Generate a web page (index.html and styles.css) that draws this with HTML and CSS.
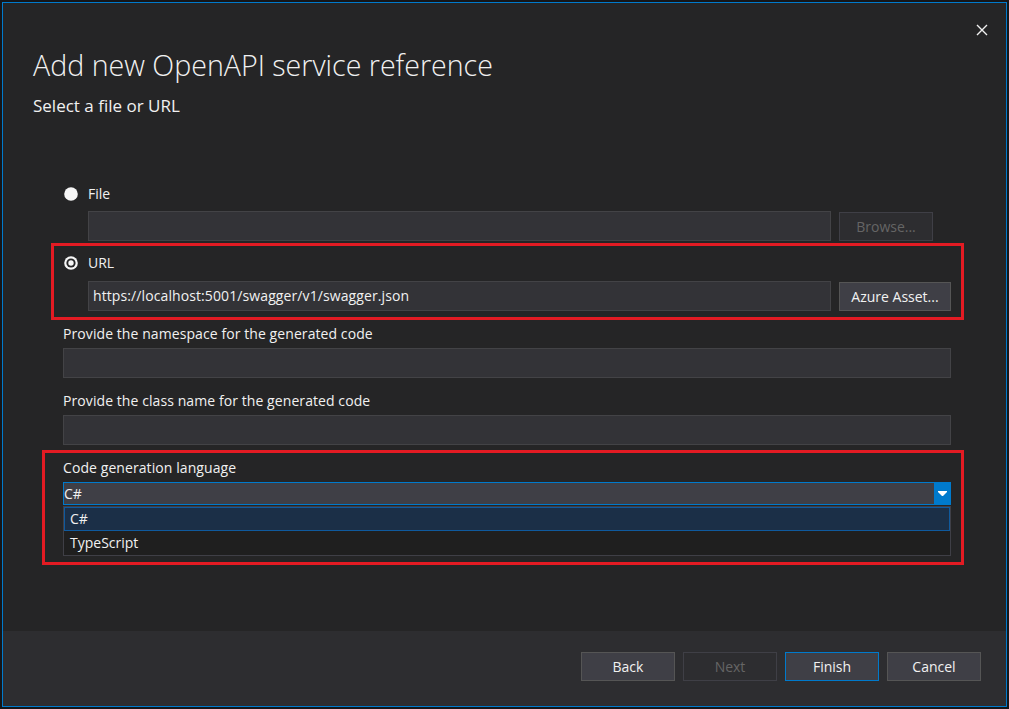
FILE: index.html
```html
<!DOCTYPE html>
<html lang="en">
<head>
<meta charset="utf-8">
<title>Add new OpenAPI service reference</title>
<link rel="stylesheet" href="styles.css">
</head>
<body>
<div class="dialog">
  <div class="main">
    <button class="close" aria-label="Close">
      <svg width="12" height="12" viewBox="0 0 12 12"><path d="M1 1 L11 11 M11 1 L1 11" stroke="#f1f1f1" stroke-width="1.4" fill="none"/></svg>
    </button>
    <h1 class="title">Add new OpenAPI service reference</h1>
    <p class="subtitle">Select a file or URL</p>
    <div class="form">
      <div class="radio-row file-row">
        <svg class="radio" width="14" height="14" viewBox="0 0 14 14"><circle cx="7" cy="7" r="6.8" fill="#f6f6f6"/></svg>
        <span>File</span>
      </div>
      <div class="input-row">
        <div class="input"></div>
        <div class="btn btn-disabled browse">Browse...</div>
      </div>
      <div class="mark mark-url">
        <div class="radio-row">
          <svg class="radio" width="14" height="14" viewBox="0 0 14 14"><circle cx="7" cy="7" r="6.8" fill="#f6f6f6"/><circle cx="7" cy="7" r="4.6" fill="#252526"/><circle cx="7" cy="7" r="2.7" fill="#f6f6f6"/></svg>
          <span>URL</span>
        </div>
        <div class="input-row url-row">
          <div class="input">https://localhost:5001/swagger/v1/swagger.json</div>
          <div class="btn azure">Azure Asset...</div>
        </div>
      </div>
      <div class="label ns-label">Provide the namespace for the generated code</div>
      <div class="input field"></div>
      <div class="label cls-label">Provide the class name for the generated code</div>
      <div class="input field"></div>
      <div class="mark mark-lang">
        <div class="label lang-label">Code generation language</div>
        <div class="combo">
          <span class="combo-text">C#</span>
          <span class="combo-arrow">
            <svg width="9" height="5" viewBox="0 0 9 5"><path d="M0 0 H9 V1 L5 5 H4 L0 1 Z" fill="#ffffff"/></svg>
          </span>
        </div>
        <div class="list">
          <div class="item item-sel">C#</div>
          <div class="item">TypeScript</div>
        </div>
      </div>
    </div>
  </div>
  <div class="footer">
    <div class="btn fbtn">Back</div>
    <div class="btn btn-disabled fbtn">Next</div>
    <div class="btn fbtn btn-primary">Finish</div>
    <div class="btn fbtn">Cancel</div>
  </div>
</div>
</body>
</html>
```

FILE: styles.css
```css
* { box-sizing: border-box; }

html, body {
  margin: 0;
  padding: 0;
}

body {
  background: #161618;
  width: 1009px;
  height: 709px;
  overflow: hidden;
  font-family: "Open Sans", "Segoe UI", sans-serif;
  font-size: 14px;
  color: #f1f1f1;
}

.dialog {
  margin: 2px 0 0 2px;
  width: 1005px;
  height: 705px;
  border: 1px solid #007acc;
  background: #252526;
  display: flex;
  flex-direction: column;
}

.main {
  position: relative;
  flex: 1;
  padding-left: 30px;
}

.close {
  position: absolute;
  top: 20px;
  right: 17px;
  width: 14px;
  height: 14px;
  padding: 0;
  border: 0;
  background: transparent;
  display: flex;
  align-items: center;
  justify-content: center;
}

.title {
  margin: 42px 0 0;
  font-size: 28.6px;
  font-weight: 300;
  line-height: 40px;
  color: #f1f1f1;
}

.subtitle {
  margin: 11px 0 0;
  font-size: 17px;
  line-height: 20px;
  color: #f1f1f1;
}

.form {
  margin-left: 30px;
  width: 888px;
  display: flex;
  flex-direction: column;
}

.radio-row {
  height: 20px;
  line-height: 20px;
  display: flex;
  align-items: center;
  gap: 10px;
}

.radio {
  margin-left: 1px;
  flex: none;
}

.file-row {
  margin-top: 68px;
}

.input-row {
  margin-top: 7px;
  height: 30px;
  display: flex;
  align-items: center;
  gap: 8px;
  padding-left: 25px;
}

.input {
  height: 30px;
  background: #333337;
  border: 1px solid #434346;
  padding: 0 4px;
  line-height: 28px;
  color: #f1f1f1;
  white-space: nowrap;
  letter-spacing: 0.1px;
}

.input-row .input {
  width: 743px;
}

.btn {
  height: 29px;
  line-height: 27px;
  text-align: center;
  background: #3f3f46;
  border: 1px solid #555555;
  color: #f1f1f1;
}

.btn-disabled {
  background: #2d2d30;
  border-color: #3f3f46;
  color: #656565;
}

.browse {
  width: 94px;
  margin-top: 1px;
}

.azure {
  width: 112px;
  margin-top: 1px;
}

.mark {
  border: 3px solid #e31b23;
  display: flex;
  flex-direction: column;
}

.mark-url {
  margin: 2px 0 0 -12px;
  width: 913px;
  padding: 7px 10px 6px 9px;
}

.url-row {
  margin-top: 8px;
}

.label {
  height: 20px;
  line-height: 20px;
  letter-spacing: 0.08px;
}

.ns-label {
  margin-top: 4px;
}

.cls-label {
  margin-top: 13px;
}

.field {
  margin-top: 4px;
}

.mark-lang {
  margin: 5px 0 0 -21px;
  width: 922px;
  padding: 5px 10px 6px 18px;
}

.combo {
  margin-top: 4px;
  height: 23px;
  background: #3f3f46;
  border: 1px solid #007acc;
  display: flex;
  align-items: center;
  justify-content: space-between;
}

.combo-text {
  line-height: 21px;
}

.combo-arrow {
  width: 17px;
  height: 23px;
  margin: -1px -1px -1px 0;
  background: #007acc;
  display: flex;
  align-items: center;
  justify-content: center;
}

.list {
  margin-top: 1px;
  height: 50px;
  background: #1f1f1f;
  border: 1px solid #3f3f46;
  display: flex;
  flex-direction: column;
}

.item {
  height: 24px;
  line-height: 24px;
  padding-left: 6px;
  color: #f1f1f1;
}

.item-sel {
  background: #1b2f47;
  border: 1px solid #0f5a9e;
  line-height: 22px;
  padding-left: 5px;
}

.footer {
  height: 75px;
  background: #2d2d30;
  display: flex;
  justify-content: flex-end;
  align-items: flex-start;
  gap: 8px;
  padding: 21px 25px 0 0;
}

.fbtn {
  width: 94px;
}

.btn-primary {
  border-color: #007acc;
}
```
